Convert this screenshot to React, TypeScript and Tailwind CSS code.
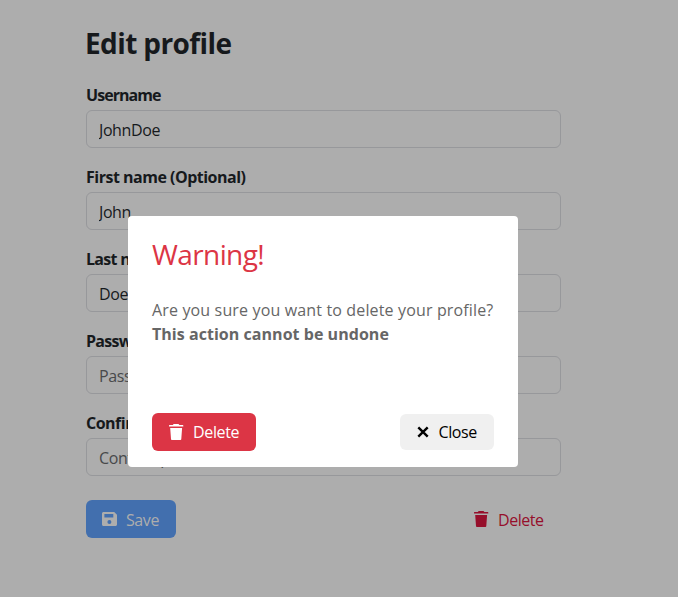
import type { ReactNode } from "react";

function TrashIcon() {
  return (
    <svg viewBox="0 0 16 16" className="mr-[9px] size-4 shrink-0" fill="currentColor" aria-hidden="true">
      <path d="M5.7 0h4.8l.9.9h3.4c.3 0 .5.2.5.5v1.2H1V1.400c0-.3.2-.5.5-.5h3.300zM2.200 3.900h11.900l-.8 11c-.1.6-.5 1.100-1.100 1.100h-8.100c-.6 0-1-.5-1.100-1.100z" />
    </svg>
  );
}

function SaveIcon() {
  return (
    <svg viewBox="0 0 16 16" className="mr-2 size-4 shrink-0" fill="currentColor" aria-hidden="true">
      <path
        fillRule="evenodd"
        d="M1.5 1h10.7L15 3.8v9.7c0 .8-.7 1.5-1.5 1.5h-12C.7 15 0 14.3 0 13.500v-11C0 1.700.7 1 1.500 1zM2.400 3v3.600h8.900V3zM7.400 8.900a2 2 0 1 0 0 4 2 2 0 1 0 0-4z"
      />
    </svg>
  );
}

function CloseIcon() {
  return (
    <svg viewBox="0 0 16 16" className="mr-2 size-4 shrink-0" fill="none" stroke="currentColor" strokeWidth="2.4" aria-hidden="true">
      <path d="M3.300 3.300l9.400 9.400M12.700 3.300l-9.400 9.400" />
    </svg>
  );
}

type FieldProps = {
  label: ReactNode;
  value?: string;
  placeholder?: string;
  labelClass: string;
  inputClass: string;
};

function Field({ label, value, placeholder, labelClass, inputClass }: FieldProps) {
  return (
    <label className="block h-[82px]">
      <span className={`mb-px block h-[26px] whitespace-nowrap text-base leading-6 font-bold text-[#16191c] ${labelClass}`}>
        {label}
      </span>
      <input
        readOnly
        defaultValue={value}
        placeholder={placeholder}
        className={`block h-[38px] w-full rounded-md border border-[#97989b] bg-[#adadad] px-3 pt-[7px] pb-[5px] text-base leading-6 text-[#16191c] outline-none placeholder:text-[#48494b] placeholder:opacity-100 ${inputClass}`}
      />
    </label>
  );
}

export default function App() {
  return (
    <div className="relative h-[597px] w-[678px] overflow-hidden bg-[#adadad] font-['Open_Sans','Noto_Sans',sans-serif]">
      <main className="ml-[86px] w-[475px] pt-[26px]">
        <h1 className="-ml-px h-[57px] text-[28px] leading-[34px] font-bold tracking-[-0.6px] whitespace-nowrap text-[#16191c]">
          Edit profile
        </h1>
        <Field label="Username" value="JohnDoe" labelClass="tracking-[-0.95px]" inputClass="tracking-[-0.4px]" />
        <Field label="First name (Optional)" value="John" labelClass="tracking-[-0.5px]" inputClass="tracking-[-0.4px]" />
        <Field label="Last name (Optional)" value="Doe" labelClass="tracking-[-0.7px]" inputClass="tracking-[-0.4px]" />
        <Field label="Password" placeholder="Password" labelClass="tracking-[-0.7px]" inputClass="tracking-[-0.4px]" />
        <Field label="Confirm password" placeholder="Confirm password" labelClass="tracking-[-0.5px]" inputClass="tracking-[-0.4px]" />
        <div className="mt-[7px] flex h-[38px] justify-between">
          <button className="flex w-[90px] items-center rounded-md bg-[#426fae] pl-4 text-base text-[#adadad]">
            <SaveIcon />
            <span className="pt-px tracking-[-0.4px]">Save</span>
          </button>
          <button className="flex w-[104px] items-center pl-4 text-base text-[#960f2b]">
            <TrashIcon />
            <span className="pt-px tracking-[-0.45px]">Delete</span>
          </button>
        </div>
      </main>

      <section
        role="dialog"
        aria-modal="true"
        className="absolute top-[216px] left-[128px] flex h-[251px] w-[390px] flex-col rounded bg-white px-6 pt-[21px] pb-4"
      >
        <h2 className="text-[28px] leading-[34px] whitespace-nowrap text-[#dc3545]">
          <span className="tracking-[-0.6px]">Warning!</span>
        </h2>
        <p className="mt-[27px] text-base leading-6 whitespace-nowrap text-[#666]">
          <span className="tracking-[0.15px]">Are you sure you want to delete your profile?</span>
          <br />
          <strong className="font-bold tracking-[0.04px]">This action cannot be undone</strong>
        </p>
        <div className="mt-auto flex h-[38px] items-center justify-between">
          <button className="flex h-[38px] w-[104px] items-center rounded-md bg-[#dc3545] pl-4 text-base text-white">
            <TrashIcon />
            <span className="pb-px tracking-[-0.35px]">Delete</span>
          </button>
          <button className="mr-[0.5px] flex h-9 w-[94px] items-center rounded-md bg-[#f0f0f0] pl-[15px] text-base text-black">
            <CloseIcon />
            <span className="pb-px tracking-[-0.4px]">Close</span>
          </button>
        </div>
      </section>
    </div>
  );
}
